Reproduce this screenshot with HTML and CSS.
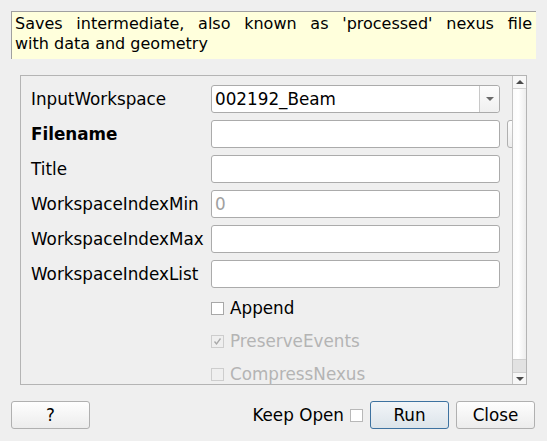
FILE: index.html
```html
<!DOCTYPE html>
<html>
<head>
<meta charset="utf-8">
<link rel="stylesheet" href="styles.css">
</head>
<body>
<div class="window">
  <div class="info">
    <span class="line1">Saves intermediate, also known as 'processed' nexus file</span>
    <span class="line2">with data and geometry</span>
  </div>
  <div class="frame">
    <div class="viewport">
      <div class="grid">
        <div class="label">InputWorkspace</div>
        <div class="combo"><span class="combo-text">002192_Beam</span><span class="combo-btn"><span class="tri-down"></span></span></div>
        <div></div>

        <div class="label bold">Filename</div>
        <div class="field"></div>
        <div class="browse"></div>

        <div class="label">Title</div>
        <div class="field"></div>
        <div></div>

        <div class="label">WorkspaceIndexMin</div>
        <div class="field"><span class="ph">0</span></div>
        <div></div>

        <div class="label">WorkspaceIndexMax</div>
        <div class="field"></div>
        <div></div>

        <div class="label">WorkspaceIndexList</div>
        <div class="field"></div>
        <div></div>

        <div></div>
        <div class="check-row"><span class="cb"></span><span>Append</span></div>
        <div></div>

        <div></div>
        <div class="check-row disabled"><span class="cb"><svg width="11" height="11" viewBox="0 0 11 11"><path d="M2.5 5.5 L4.5 8 L8.5 2.5" fill="none" stroke="#a8a8a8" stroke-width="1.3"/></svg></span><span>PreserveEvents</span></div>
        <div></div>

        <div></div>
        <div class="check-row disabled"><span class="cb"></span><span>CompressNexus</span></div>
        <div></div>
      </div>
    </div>
    <div class="scrollbar">
      <div class="sb-arrow"><span class="tri-up"></span></div>
      <div class="sb-handle"></div>
      <div class="sb-groove"></div>
      <div class="sb-arrow down"><span class="tri-down dark"></span></div>
    </div>
  </div>
  <div class="buttons">
    <button class="btn">?</button>
    <div class="spacer"></div>
    <span class="keep">Keep Open</span>
    <span class="cb keep-cb"></span>
    <button class="btn run">Run</button>
    <button class="btn">Close</button>
  </div>
</div>
</body>
</html>
```

FILE: styles.css
```css
* { box-sizing: border-box; }
html, body {
  margin: 0;
  padding: 0;
  background: #efefef;
  font-family: "DejaVu Sans", sans-serif;
  font-size: 16.8px;
  color: #000;
}
.window {
  width: 547px;
  height: 441px;
  padding: 11px 12px 0 11px;
  display: flex;
  flex-direction: column;
}
.info {
  height: 48px;
  width: 525px;
  background: #ffffdc;
  border-top: 1px solid #a0a0a0;
  border-left: 1px solid #a0a0a0;
  padding: 2px 4px 0 3px;
  line-height: 20px;
  font-size: 16px;
}
.info span { display: block; }
.line1 { text-align: justify; text-align-last: justify; }
.line2 { text-align: left; }

.frame {
  margin: 16px 0 0 9px;
  width: 507px;
  height: 310px;
  border: 1px solid #b4b4b4;
  display: flex;
}
.viewport {
  width: 491px;
  height: 308px;
  overflow: hidden;
}
.grid {
  display: grid;
  grid-template-columns: 180px 289px 80px;
  grid-auto-rows: auto;
  row-gap: 7px;
  padding: 9px 0 0 10px;
}
.label {
  display: flex;
  align-items: center;
  height: 28px;
  white-space: nowrap;
}
.bold { font-weight: bold; }
.field, .combo {
  height: 28px;
  background: #fff;
  border: 1px solid #ababab;
  border-radius: 3px;
  display: flex;
  align-items: center;
  padding-left: 3px;
}
.ph { color: #a0a0a0; }
.combo { padding-left: 3px; padding-right: 0; }
.combo-text { flex: 1; }
.combo-btn {
  width: 20px;
  height: 100%;
  border-left: 1px solid #c8c8c8;
  display: flex;
  align-items: center;
  justify-content: center;
  background: linear-gradient(#fcfcfc, #f0f0f0);
  border-radius: 0 3px 3px 0;
}
.tri-down {
  width: 0; height: 0;
  border-left: 4px solid transparent;
  border-right: 4px solid transparent;
  border-top: 4px solid #6a6a6a;
}
.tri-down.dark { border-top-color: #4a4a4a; }
.tri-up {
  width: 0; height: 0;
  border-left: 4px solid transparent;
  border-right: 4px solid transparent;
  border-bottom: 4px solid #4a4a4a;
}
.browse {
  margin-left: 7px;
  height: 28px;
  border: 1px solid #b0b0b0;
  border-radius: 3px;
  background: linear-gradient(#fdfdfd, #ececec);
}
.check-row {
  height: 26px;
  display: flex;
  align-items: center;
  gap: 6px;
  white-space: nowrap;
}
.cb {
  width: 13px;
  height: 13px;
  border: 1px solid #a8a8a8;
  background: #fff;
  display: inline-flex;
  align-items: center;
  justify-content: center;
  flex: none;
}
.disabled { color: #b4b4b4; }
.disabled .cb { border-color: #cdcdcd; background: #efefef; }

.scrollbar {
  width: 14px;
  height: 308px;
  border-left: 1px solid #c4c4c4;
  display: flex;
  flex-direction: column;
  background: #f4f4f4;
}
.sb-arrow {
  height: 13px;
  display: flex;
  align-items: center;
  justify-content: center;
  background: #f7f7f7;
  border-bottom: 1px solid #d2d2d2;
}
.sb-arrow.down { border-bottom: none; border-top: 1px solid #cfcfcf; height: 12px; }
.sb-handle {
  height: 271px;
  background: linear-gradient(90deg, #fbfbfb, #ffffff 40%, #ededed);
  border-bottom: 1px solid #d0d0d0;
}
.sb-groove {
  flex: 1;
  background: #e2e2e2;
}

.buttons {
  margin-top: 16px;
  display: flex;
  align-items: center;
  height: 28px;
}
.btn {
  font-family: "DejaVu Sans", sans-serif;
  font-size: 16.8px;
  color: #000;
  width: 79px;
  height: 28px;
  border: 1px solid #b0b0b0;
  border-radius: 3px;
  background: linear-gradient(#fefefe, #ececec);
  padding: 0;
}
.spacer { flex: 1; }
.keep { margin-right: 6px; }
.keep-cb { margin-right: 7px; border-color: #b8b8b8; }
.run {
  border-color: #3d72a0;
  background: linear-gradient(#f2f5f8, #dce4ea);
  margin-right: 7px;
}
```
